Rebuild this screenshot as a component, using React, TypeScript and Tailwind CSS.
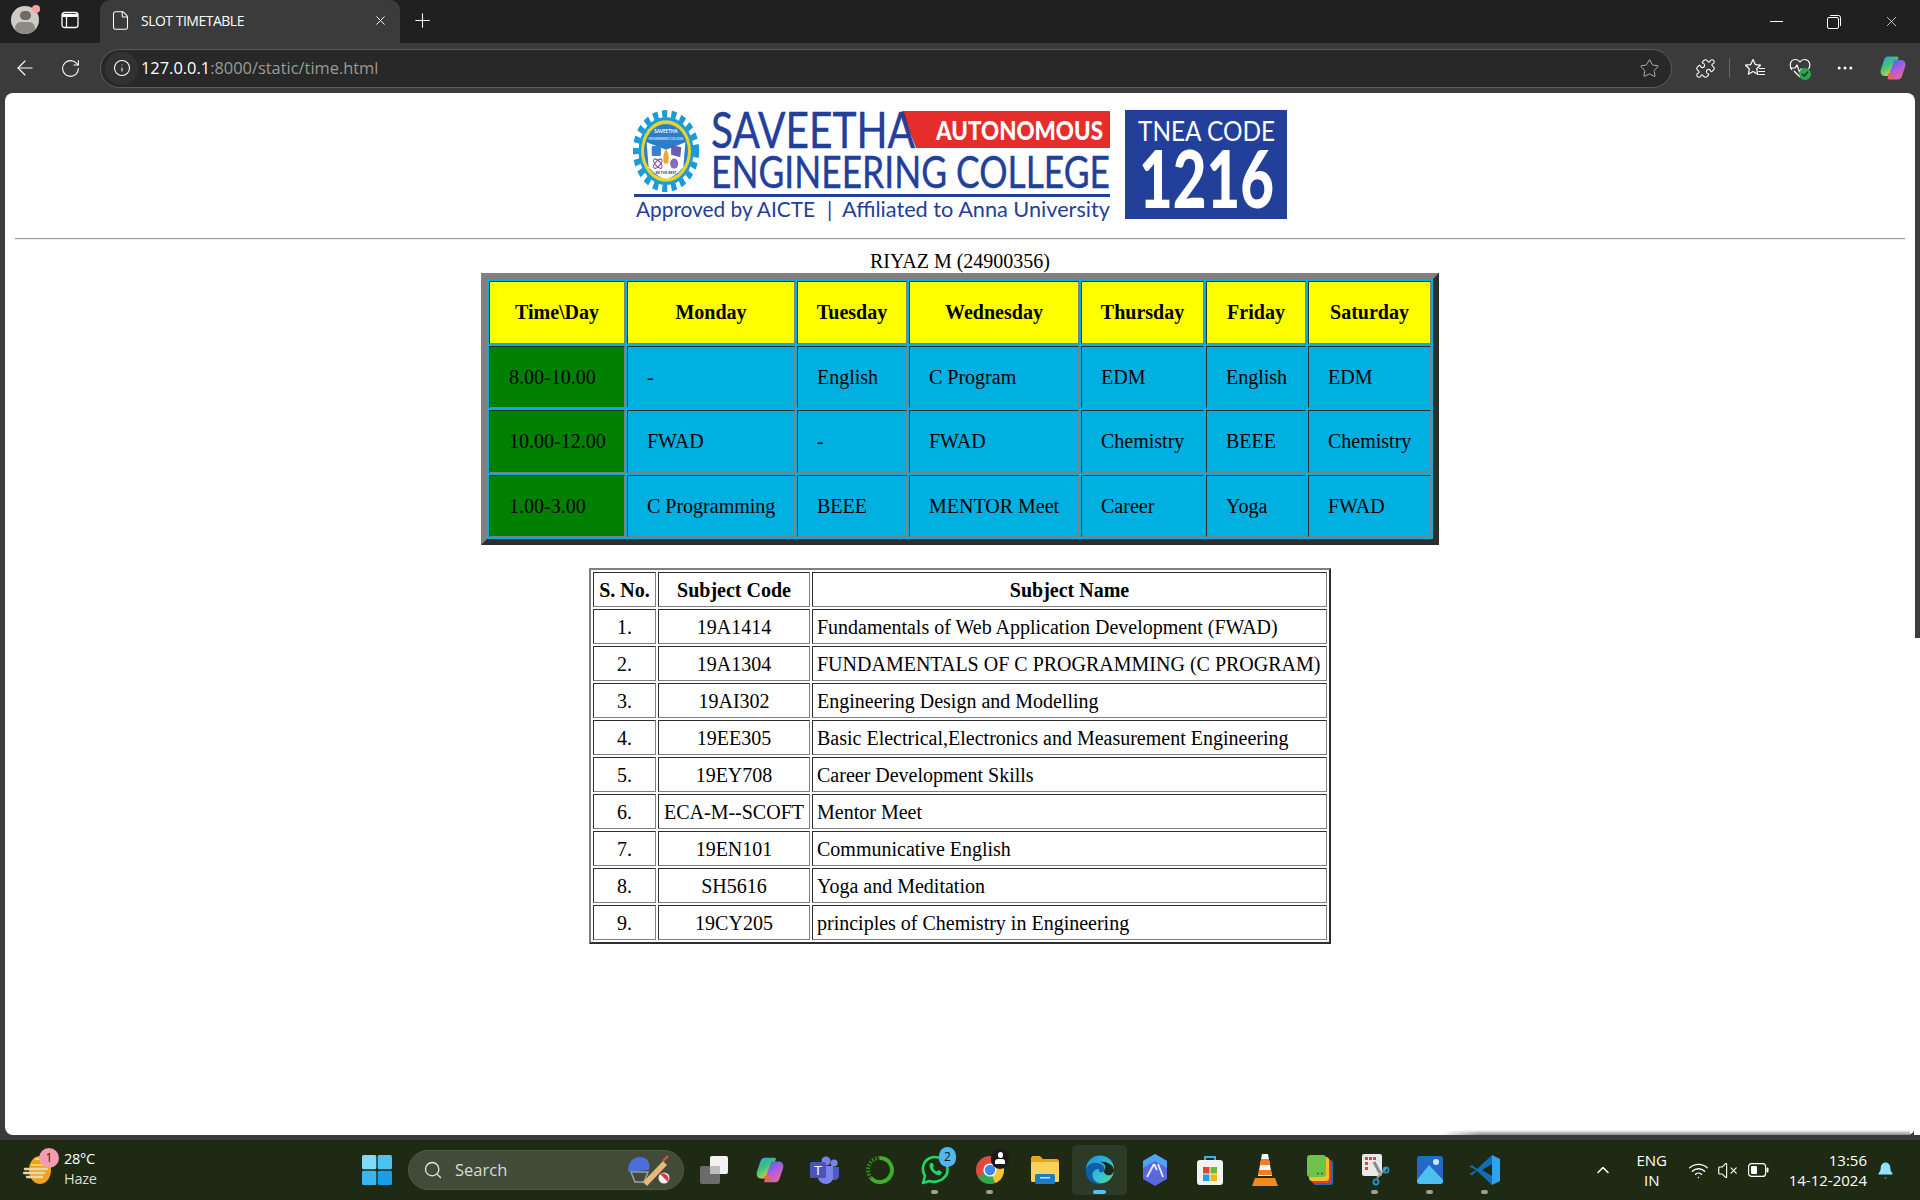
import { ArrowLeft, Bell, ChevronUp, File, Info, MoreHorizontal, Plus, Puzzle, RotateCw, Search, Star, VolumeX, Wifi, X } from 'lucide-react'

const days = ['Time\\Day', 'Monday', 'Tuesday', 'Wednesday', 'Thursday', 'Friday', 'Saturday']

const slots = [
  ['8.00-10.00', '-', 'English', 'C Program', 'EDM', 'English', 'EDM'],
  ['10.00-12.00', 'FWAD', '-', 'FWAD', 'Chemistry', 'BEEE', 'Chemistry'],
  ['1.00-3.00', 'C Programming', 'BEEE', 'MENTOR Meet', 'Career', 'Yoga', 'FWAD'],
]

const subjects = [
  ['1.', '19A1414', 'Fundamentals of Web Application Development (FWAD)'],
  ['2.', '19A1304', 'FUNDAMENTALS OF C PROGRAMMING (C PROGRAM)'],
  ['3.', '19AI302', 'Engineering Design and Modelling'],
  ['4.', '19EE305', 'Basic Electrical,Electronics and Measurement Engineering'],
  ['5.', '19EY708', 'Career Development Skills'],
  ['6.', 'ECA-M--SCOFT', 'Mentor Meet'],
  ['7.', '19EN101', 'Communicative English'],
  ['8.', 'SH5616', 'Yoga and Meditation'],
  ['9.', '19CY205', 'principles of Chemistry in Engineering'],
]

const inset = 'border border-t-[#2e2e2e] border-l-[#2e2e2e] border-r-[#808080] border-b-[#808080]'

function Logo() {
  const blue = '#22409a'
  return (
    <svg viewBox="633 93 654 129" className="block mx-auto w-[654px] h-[129px] shrink-0">
      {/* gear */}
      <g transform="translate(666 151) scale(1.02 1.26) translate(-666 -150)">
        <circle cx="666" cy="150" r="29.5" fill="none" stroke="#1d9bd8" strokeWidth="6" strokeDasharray="5 4" />
        <circle cx="666" cy="150" r="27" fill="#1d9bd8" />
        <circle cx="666" cy="150" r="24.5" fill="#e8d22c" />
        <circle cx="666" cy="150" r="21.5" fill="#2a7fc8" />
        <path d="M647 143 L666 149 L685 143 L683 163 Q674 171 666 172 Q658 171 649 163 Z" fill="#ffffff" />
        <text x="666" y="136" textAnchor="middle" fontSize="4.5" fontWeight="700" fill="#fff" fontFamily="Lato, sans-serif">SAVEETHA</text>
        <text x="666" y="141" textAnchor="middle" fontSize="3" fill="#fff" fontFamily="Lato, sans-serif">ENGINEERING COLLEGE</text>
        <rect x="652" y="146" width="9" height="8" rx="1" fill="#3d7fd0" />
        <path d="M671 145 L681 147 L680 155 L671 153 Z" fill="#6a5cb0" />
        <ellipse cx="658" cy="160" rx="5" ry="2.2" fill="none" stroke="#7a4ea8" strokeWidth="0.9" transform="rotate(40 658 160)" />
        <ellipse cx="658" cy="160" rx="5" ry="2.2" fill="none" stroke="#7a4ea8" strokeWidth="0.9" transform="rotate(-40 658 160)" />
        <path d="M666 148 Q670 154 668 160 L664 160 Q662 154 666 148 Z" fill="#f0a92c" />
        <circle cx="674" cy="160" r="4" fill="#8a6ac0" />
        <text x="666" y="168" textAnchor="middle" fontSize="3.4" fontWeight="700" fill="#22409a" fontFamily="Lato, sans-serif">BE THE BEST</text>
      </g>

      {/* name */}
      <path d="M902 111 H1110 V148 H916 Z" fill="#e52d2b" />
      <text x="711" y="148" textLength="204" lengthAdjust="spacingAndGlyphs" fontSize="50" fontWeight="400" fill={blue} stroke={blue} strokeWidth="0.4" fontFamily="Lato, sans-serif">SAVEETHA</text>
      <text x="936" y="140" textLength="167" lengthAdjust="spacingAndGlyphs" fontSize="26" fontWeight="900" fill="#fff" fontFamily="Lato, sans-serif">AUTONOMOUS</text>
      <text x="711" y="188" textLength="399" lengthAdjust="spacingAndGlyphs" fontSize="44" fontWeight="400" fill={blue} stroke={blue} strokeWidth="0.4" fontFamily="Lato, sans-serif">ENGINEERING COLLEGE</text>
      <rect x="634" y="194" width="476" height="3" fill={blue} />
      <text x="636" y="217" textLength="179" lengthAdjust="spacingAndGlyphs" fontSize="21" fill={blue} fontFamily="Lato, sans-serif">Approved by AICTE</text>
      <text x="827" y="217" fontSize="21" fill={blue} fontFamily="Lato, sans-serif">|</text>
      <text x="842" y="217" textLength="268" lengthAdjust="spacingAndGlyphs" fontSize="21" fill={blue} fontFamily="Lato, sans-serif">Affiliated to Anna University</text>

      {/* code box */}
      <rect x="1125" y="110" width="162" height="109" fill={blue} />
      <text x="1138" y="141" textLength="137" lengthAdjust="spacingAndGlyphs" fontSize="27" fill="#fff" fontFamily="Lato, sans-serif">TNEA CODE</text>
      <text x="1139" y="208" textLength="135" lengthAdjust="spacingAndGlyphs" fontSize="80" fontWeight="900" fill="#fff" fontFamily="Lato, sans-serif">1216</text>
    </svg>
  )
}

function Timetable() {
  return (
    <table className="table-fixed mx-auto w-[958px] border-separate border-spacing-[2px] bg-[#00b0e0] border-[6px] border-t-[#808080] border-l-[#808080] border-r-[#2e2e2e] border-b-[#2e2e2e]">
      <colgroup>
        <col className="w-[136px]" />
        <col className="w-[168px]" />
        <col className="w-[110px]" />
        <col className="w-[170px]" />
        <col className="w-[123px]" />
        <col className="w-[100px]" />
        <col className="w-[123px]" />
      </colgroup>
      <thead>
        <tr>
          {days.map((d) => (
            <th key={d} className={`${inset} h-[62.5px] p-0 bg-[#ffff00] font-bold text-center`}>
              {d}
            </th>
          ))}
        </tr>
      </thead>
      <tbody>
        {slots.map((row) => (
          <tr key={row[0]}>
            {row.map((c, i) => (
              <td key={i} className={`${inset} h-[62.5px] p-0 pl-[19px] text-left ${i === 0 ? 'bg-[#008000]' : 'bg-[#00b0e0]'}`}>
                {c}
              </td>
            ))}
          </tr>
        ))}
      </tbody>
    </table>
  )
}

function SubjectTable() {
  return (
    <table className="table-fixed mx-auto mt-[23px] w-[742px] border-separate border-spacing-[2px] border-2 border-t-[#808080] border-l-[#808080] border-r-[#2e2e2e] border-b-[#2e2e2e]">
      <colgroup>
        <col className="w-[63px]" />
        <col className="w-[152px]" />
        <col className="w-[515px]" />
      </colgroup>
      <thead>
        <tr>
          <th className={`${inset} h-[35px] p-0 font-bold text-center`}>S. No.</th>
          <th className={`${inset} h-[35px] p-0 font-bold text-center`}>Subject Code</th>
          <th className={`${inset} h-[35px] p-0 font-bold text-center`}>Subject Name</th>
        </tr>
      </thead>
      <tbody>
        {subjects.map((s) => (
          <tr key={s[0]}>
            <td className={`${inset} h-[35px] p-0 text-center`}>{s[0]}</td>
            <td className={`${inset} h-[35px] p-0 text-center whitespace-nowrap`}>{s[1]}</td>
            <td className={`${inset} h-[35px] p-0 pl-[4px] whitespace-nowrap`}>{s[2]}</td>
          </tr>
        ))}
      </tbody>
    </table>
  )
}

function TitleBar() {
  return (
    <div className="h-[43px] shrink-0 bg-[#202020] flex items-end text-white">
      <div className="w-[50px] h-[43px] pb-[3px] flex items-center justify-center relative">
        <div className="w-[28px] h-[28px] rounded-full bg-[#cfccc8] overflow-hidden flex flex-col items-center pt-[5px]">
          <div className="w-[11px] h-[11px] rounded-full bg-[#6e6a66]" />
          <div className="w-[20px] h-[14px] mt-[2px] rounded-full bg-[#8d8a86]" />
        </div>
        <div className="absolute top-[5px] left-[32px] w-[8px] h-[8px] rounded-full bg-[#f4a3a3]" />
      </div>
      <div className="w-[40px] h-[43px] pb-[3px] flex items-center justify-center">
        <svg width="18" height="18" viewBox="0 0 18 18" fill="none" stroke="#fff" strokeWidth="1.3">
          <rect x="1" y="1.5" width="16" height="15" rx="2.5" />
          <path d="M1.5 4.5H16.5" strokeWidth="3" />
          <path d="M5.5 5V16" />
        </svg>
      </div>
      <div className="w-[300px] h-[43px] ml-[10px] pb-[3px] bg-[#3b3b3b] rounded-t-[10px] flex items-center pl-[10px]">
        <File size={21} strokeWidth={1.2} />
        <span className="ml-[10px] text-[14px] font-['Open_Sans',sans-serif] tracking-[-0.5px]">SLOT TIMETABLE</span>
        <X size={15} strokeWidth={1.5} className="ml-auto mr-[12px]" />
      </div>
      <div className="w-[44px] h-[43px] pb-[3px] flex items-center justify-center">
        <Plus size={23} strokeWidth={1.1} />
      </div>
      <div className="ml-auto h-[43px] flex items-center">
        <div className="w-[57px] flex justify-center">
          <div className="w-[13px] h-px bg-white" />
        </div>
        <div className="w-[57px] flex justify-center">
          <svg width="14" height="14" viewBox="0 0 14 14" fill="none" stroke="#fff" strokeWidth="1">
            <rect x="0.5" y="2.5" width="11" height="11" rx="1.5" />
            <path d="M3 0.5H11.5A2 2 0 0 1 13.5 2.5V11" />
          </svg>
        </div>
        <div className="w-[58px] flex justify-center">
          <X size={17} strokeWidth={1} />
        </div>
      </div>
    </div>
  )
}

function Toolbar() {
  return (
    <div className="h-[50px] shrink-0 bg-[#3b3b3b] flex items-center text-white">
      <div className="w-[50px] flex justify-center">
        <ArrowLeft size={24} strokeWidth={1.1} />
      </div>
      <div className="w-[40px] flex justify-center">
        <RotateCw size={21} strokeWidth={1.2} />
      </div>
      <div className="w-[1572px] ml-[10px] h-[39px] rounded-full bg-[#282828] border border-[#5c5c5c] flex items-center pl-[4px] pr-[10px]">
        <div className="w-[33px] h-[33px] rounded-full bg-[#323232] flex items-center justify-center">
          <Info size={18} strokeWidth={1.4} />
        </div>
        <span className="ml-[3px] text-[16.4px] font-['Open_Sans',sans-serif]">
          127.0.0.1<span className="text-[#9a9a9a]">:8000/static/time.html</span>
        </span>
        <Star size={21} strokeWidth={1.1} className="ml-auto mr-[1px] text-[#b5b5b5]" />
      </div>
      <div className="w-[66px] flex justify-center">
        <Puzzle size={21} strokeWidth={1.2} />
      </div>
      <div className="w-px h-[20px] bg-[#666] -ml-[9px]" />
      <div className="w-[50px] flex justify-center">
        <svg width="22" height="22" viewBox="0 0 22 22" fill="none" stroke="#fff" strokeWidth="1.2" strokeLinejoin="round">
          <path d="M9 2.5L11.3 7.6L16.5 8.2L12.7 11.8L13.7 17.3L9 14.6L4.3 17.3L5.3 11.8L1.5 8.2L6.7 7.6Z" />
          <path d="M15 11.5H21M14.5 14.5H21M14.5 17.5H21" />
        </svg>
      </div>
      <div className="w-[40px] relative flex justify-center">
        <svg width="22" height="20" viewBox="0 0 22 20" fill="none" stroke="#fff" strokeWidth="1.2" strokeLinejoin="round">
          <path d="M3 12C0 8 1 2 6 1.5C8.5 1.3 10 2.5 11 4C12 2.5 13.5 1.3 16 1.5C21 2 22 7.5 19.5 11" />
          <path d="M1 10H6L8 7L10.5 14L12 11H14" />
          <path d="M5 13L11 19" />
        </svg>
        <div className="absolute left-[19px] top-[10px] w-[12px] h-[12px] rounded-full bg-[#2fa44f] flex items-center justify-center">
          <svg width="8" height="8" viewBox="0 0 8 8" fill="none" stroke="#10301a" strokeWidth="1.4">
            <path d="M1 4L3.2 6L7 1.8" />
          </svg>
        </div>
      </div>
      <div className="w-[50px] flex justify-center">
        <MoreHorizontal size={20} strokeWidth={1.6} />
      </div>
      <div className="w-[46px] flex justify-center">
        <CopilotIcon size={28} />
      </div>
    </div>
  )
}

function CopilotIcon({ size }: { size: number }) {
  return (
    <svg width={size} height={size} viewBox="0 0 28 28">
      <defs>
        <linearGradient id={`cpa${size}`} x1="0" y1="0" x2="0.6" y2="1">
          <stop offset="0" stopColor="#2f9be8" />
          <stop offset="0.5" stopColor="#3fc37a" />
          <stop offset="1" stopColor="#f2d03a" />
        </linearGradient>
        <linearGradient id={`cpb${size}`} x1="0.2" y1="0" x2="0.8" y2="1">
          <stop offset="0" stopColor="#3b6fe0" />
          <stop offset="0.5" stopColor="#b25be0" />
          <stop offset="1" stopColor="#f26a8a" />
        </linearGradient>
      </defs>
      <path d="M9 2.5H18C19.5 2.5 20 4 19 5L13 21C12.5 22.5 11 23 9.5 22H5C2.5 21.5 1 19 1.7 16L5 6C5.8 3.8 7 2.5 9 2.5Z" fill={`url(#cpa${size})`} />
      <path d="M19 6H23C25.5 6.5 27 9 26.3 12L23 22C22.2 24.2 21 25.5 19 25.5H10C8.5 25.5 8 24 9 23L15 7C15.5 6 17 5.5 19 6Z" fill={`url(#cpb${size})`} />
      <path d="M8.5 19.5H15L12.8 25H10Z" fill="#f0643c" />
    </svg>
  )
}

function TaskIcon({ children, dot, active }: { children: React.ReactNode; dot?: boolean; active?: boolean }) {
  return (
    <div className={`relative w-[55px] h-[50px] shrink-0 flex items-center justify-center rounded-[5px] ${active ? 'bg-[#2e3a28]' : ''}`}>
      {children}
      {dot && <div className="absolute bottom-[1px] left-[23.5px] w-[7px] h-[4px] rounded-full bg-[#9a9f96]" />}
      {active && <div className="absolute bottom-[1px] left-[20.5px] w-[13px] h-[4px] rounded-full bg-[#4fc3f7]" />}
    </div>
  )
}

function Taskbar() {
  return (
    <div className="h-[60px] shrink-0 bg-[#1f2a15] flex items-center text-white font-['Open_Sans',sans-serif]">
      {/* weather */}
      <div className="w-[362px] h-full flex items-center relative shrink-0">
        <svg width="34" height="34" viewBox="0 0 34 34" className="ml-[23px]">
          <ellipse cx="17" cy="17" rx="11" ry="14" fill="#f2a01e" />
          <path d="M12 6H26M8 12H27" stroke="#ffd65a" strokeWidth="2" />
          <path d="M2 16H24M1 20H21M4 24H19" stroke="#e9d7a8" strokeWidth="2.4" strokeLinecap="round" />
        </svg>
        <div className="absolute left-[39px] top-[8px] w-[20px] h-[20px] rounded-full bg-[#f59db0] flex items-center justify-center text-[12px] text-[#222]">1</div>
        <div className="ml-[7px] -mt-[2px] flex flex-col leading-[20px] text-[14.5px] tracking-[-0.3px]">
          <span>28°C</span>
          <span className="text-[#d8dcd2]">Haze</span>
        </div>
      </div>
      {/* start */}
      <div className="w-[46px] shrink-0">
        <svg width="30" height="30" viewBox="0 0 30 30">
          <rect x="0" y="0" width="14.3" height="14.3" rx="1.5" fill="#7fdcf8" />
          <rect x="15.7" y="0" width="14.3" height="14.3" rx="1.5" fill="#4cc2f1" />
          <rect x="0" y="15.7" width="14.3" height="14.3" rx="1.5" fill="#3ab7f0" />
          <rect x="15.7" y="15.7" width="14.3" height="14.3" rx="1.5" fill="#1a9eea" />
        </svg>
      </div>
      {/* search */}
      <div className="w-[276px] h-[40px] shrink-0 rounded-full bg-[#414b38] border border-[#4f5946] flex items-center pl-[14px] pr-[12px]">
        <Search size={20} strokeWidth={1.6} className="text-[#e6e6e6]" />
        <span className="ml-[12px] text-[16.5px] text-[#d9dcd5]">Search</span>
        <svg width="46" height="34" viewBox="0 0 46 34" className="ml-auto">
          <path d="M3 18C3 8 9 4 15 4C22 4 26 10 24 17L4 19Z" fill="#4a6fd8" />
          <path d="M6 19H23L19 29H10Z" fill="none" stroke="#9aa0a0" strokeWidth="1.5" />
          <path d="M18 29L38 8L42 12L22 33Z" fill="#e8b878" />
          <path d="M38 8L43 3" stroke="#d6504a" strokeWidth="2.4" />
          <circle cx="39" cy="25" r="5.5" fill="#f4f0f0" />
          <path d="M35 21A6 6 0 0 1 43 29Z" fill="#d83a4a" />
        </svg>
      </div>
      {/* apps */}
      <div className="flex items-center ml-[3px]">
        <TaskIcon>
          <svg width="30" height="28" viewBox="0 0 30 28">
            <rect x="0" y="10" width="20" height="18" rx="2" fill="#6b6b6b" />
            <rect x="10" y="0" width="18" height="18" rx="2" fill="#f2f2f2" />
            <rect x="10" y="10" width="10" height="8" fill="#bdbdbd" />
          </svg>
        </TaskIcon>
        <TaskIcon><CopilotIcon size={30} /></TaskIcon>
        <TaskIcon>
          <svg width="30" height="28" viewBox="0 0 30 28">
            <circle cx="24" cy="7" r="3.6" fill="#7b83eb" />
            <path d="M19 11H29V19C29 22 27 24 24 24H19Z" fill="#5059c9" />
            <circle cx="16" cy="5" r="4.5" fill="#7b83eb" />
            <path d="M8 10H23V21C23 25 20 28 16 28C12 28 8 25 8 21Z" fill="#7b83eb" />
            <rect x="0" y="6" width="16" height="16" rx="1.5" fill="#4b53bc" />
            <text x="8" y="19" textAnchor="middle" fontSize="13" fill="#fff" fontFamily="Liberation Sans, sans-serif">T</text>
          </svg>
        </TaskIcon>
        <TaskIcon>
          <svg width="30" height="30" viewBox="0 0 30 30" fill="none">
            <path d="M15 3A12 12 0 1 1 6 23" stroke="#3fae2a" strokeWidth="4" />
            <path d="M6 23A12 12 0 0 1 15 3" stroke="#2f8a22" strokeWidth="4" strokeDasharray="1.6 1.6" />
          </svg>
        </TaskIcon>
        <TaskIcon dot>
          <svg width="30" height="32" viewBox="0 0 30 32" fill="none">
            <path d="M3 29L5 22C1 15 3 7 10 4C18 1 27 6 27.5 15C28 24 18 30 9 27Z" stroke="#25d366" strokeWidth="2.6" strokeLinejoin="round" />
            <path d="M11 9C9 10 9 13 11 16C13 19 17 22 20 21C22 20 22 18 21.5 17.5L18.5 16L17 17.5C15 17 13.5 15 13 13.5L14 12L12.8 9Z" fill="#25d366" />
          </svg>
          <div className="absolute left-[32px] top-[2px] w-[17px] h-[20px] rounded-full bg-[#4db8f2] flex items-center justify-center text-[12px] text-[#111]">2</div>
        </TaskIcon>
        <TaskIcon dot>
          <svg width="30" height="30" viewBox="0 0 30 30">
            <circle cx="15" cy="15" r="14" fill="#dd4b3e" />
            <path d="M15 15L3 22A14 14 0 0 0 20 28Z" fill="#2da94f" />
            <path d="M15 15L20 28A14 14 0 0 0 28.5 11L15 9Z" fill="#f7c52c" />
            <circle cx="15" cy="15" r="6.6" fill="#fff" />
            <circle cx="15" cy="15" r="5.2" fill="#4285f4" />
          </svg>
          <div className="absolute left-[29px] top-[4px] w-[18px] h-[20px] rounded-full bg-[#1a1a1a] flex flex-col items-center pt-[3px]">
            <div className="w-[5px] h-[6px] rounded-full bg-white" />
            <div className="w-[10px] h-[5px] mt-[1px] rounded-t-[3px] bg-white" />
          </div>
        </TaskIcon>
        <TaskIcon>
          <svg width="28" height="28" viewBox="0 0 28 28">
            <path d="M0 2C0 1 1 0 2 0H9L12 3H26C27 3 28 4 28 5V8H0Z" fill="#e8a31c" />
            <rect x="0" y="6" width="28" height="20" rx="1.5" fill="#fad15c" />
            <rect x="4" y="18" width="20" height="10" rx="1.5" fill="#1a7fc4" />
            <rect x="9" y="21" width="10" height="1.5" fill="#bfe3f7" />
          </svg>
        </TaskIcon>
        <TaskIcon active>
          <svg width="30" height="30" viewBox="0 0 30 30">
            <defs>
              <linearGradient id="edgea" x1="0" y1="0" x2="1" y2="1">
                <stop offset="0" stopColor="#1e8ed8" />
                <stop offset="0.6" stopColor="#35c1d8" />
                <stop offset="1" stopColor="#59d67e" />
              </linearGradient>
            </defs>
            <circle cx="15" cy="14.5" r="14" fill="url(#edgea)" />
            <path d="M1 15C2 9 8 7 13 8C18 9 21 13 19 16C17 19 13 17 14 14C9 14 6 18 8 23C10 27 15 29 18 29C8 31 0 24 1 15Z" fill="#0f5fa8" />
            <path d="M19 16C22 12 20 8 15 7C21 6 28 9 29 15C29 19 25 21 22 20C20 19 19 18 19 16Z" fill="#1f2a15" />
          </svg>
        </TaskIcon>
        <TaskIcon>
          <svg width="26" height="32" viewBox="0 0 26 32">
            <path d="M13 0L25 7V25L13 32L1 25V7Z" fill="#5b66e0" />
            <path d="M1 7L13 0L25 7V14L13 7L1 14Z" fill="#4fa3f0" />
            <path d="M5 23L12 10M12 10L15 16M16 10L21 23" stroke="#e8f0ff" strokeWidth="1.8" fill="none" />
          </svg>
        </TaskIcon>
        <TaskIcon>
          <svg width="26" height="30" viewBox="0 0 26 30">
            <path d="M8 6V2H18V6" fill="none" stroke="#30b7ef" strokeWidth="2" />
            <rect x="0" y="5" width="26" height="25" rx="3" fill="#f3f3f3" />
            <rect x="6" y="12" width="6.5" height="6.5" fill="#e8442a" />
            <rect x="13.5" y="12" width="6.5" height="6.5" fill="#6cbb2c" />
            <rect x="6" y="19.5" width="6.5" height="6.5" fill="#1fa1e8" />
            <rect x="13.5" y="19.5" width="6.5" height="6.5" fill="#f8b60c" />
          </svg>
        </TaskIcon>
        <TaskIcon>
          <svg width="26" height="32" viewBox="0 0 26 32">
            <path d="M10 0H16L20 22H6Z" fill="#f5f5f5" />
            <path d="M9.2 5H16.8L18 11H8ZM7 16H19L20 21H6Z" fill="#f47b1f" />
            <path d="M3 24H23L26 32H0Z" fill="#f08a1a" />
          </svg>
        </TaskIcon>
        <TaskIcon>
          <svg width="26" height="30" viewBox="0 0 26 30">
            <rect x="6" y="5" width="20" height="25" rx="3" fill="#1c6fb5" />
            <rect x="4" y="4" width="20" height="24" rx="3" fill="#e83a2a" />
            <rect x="2" y="2" width="20" height="24" rx="3" fill="#f3c228" />
            <rect x="0" y="0" width="19" height="22" rx="3" fill="#6cc24a" />
            <circle cx="11" cy="18.5" r="1" fill="#3a6a2a" />
            <circle cx="15" cy="18.5" r="1" fill="#3a6a2a" />
          </svg>
        </TaskIcon>
        <TaskIcon dot>
          <svg width="30" height="32" viewBox="0 0 30 32">
            <rect x="2" y="0" width="20" height="22" rx="2" fill="#e9e9e9" />
            <rect x="5" y="3" width="3" height="3" fill="#e0483a" />
            <rect x="5" y="8" width="3" height="3" fill="#e0483a" />
            <rect x="5" y="13" width="3" height="3" fill="#e0483a" />
            <rect x="9" y="3" width="3" height="3" fill="#e0483a" />
            <rect x="13" y="3" width="3" height="3" fill="#e0483a" />
            <path d="M14 8L20 19" stroke="#8a8a8a" strokeWidth="3" />
            <path d="M26 14L17 24" stroke="#a0a0a0" strokeWidth="2" />
            <circle cx="26" cy="16" r="2.6" fill="none" stroke="#1f9ad6" strokeWidth="1.6" />
            <circle cx="16" cy="28" r="2.6" fill="none" stroke="#1f9ad6" strokeWidth="1.6" />
          </svg>
        </TaskIcon>
        <TaskIcon dot>
          <svg width="26" height="28" viewBox="0 0 26 28">
            <defs>
              <linearGradient id="photoa" x1="0" y1="0" x2="0" y2="1">
                <stop offset="0" stopColor="#1c6fc8" />
                <stop offset="1" stopColor="#3a58c8" />
              </linearGradient>
            </defs>
            <rect x="0" y="0" width="26" height="28" rx="3" fill="url(#photoa)" />
            <circle cx="19" cy="6" r="3" fill="#cfe8ff" />
            <path d="M0 24L12 9L26 24V25C26 27 25 28 23 28H3C1 28 0 27 0 25Z" fill="#4ec0ef" />
          </svg>
        </TaskIcon>
        <TaskIcon dot>
          <svg width="32" height="32" viewBox="0 0 32 32">
            <path d="M23 1L8 15L3 11L0.5 12.5L7 16L0.5 20L3 21.5L8 17L23 31L23 22L13 16L23 10Z" fill="#0f6fb8" />
            <path d="M23 1L31 5V27L23 31Z" fill="#2aa4f0" />
          </svg>
        </TaskIcon>
      </div>
      {/* tray */}
      <div className="ml-auto flex items-center h-full shrink-0">
        <ChevronUp size={20} strokeWidth={1.8} />
        <div className="ml-[15px] w-[48px] flex flex-col items-center leading-[20px] text-[15px]">
          <span>ENG</span>
          <span>IN</span>
        </div>
        <Wifi size={21} strokeWidth={1.6} className="ml-[12px]" />
        <VolumeX size={21} strokeWidth={1.3} className="ml-[8px]" />
        <svg width="21" height="14" viewBox="0 0 21 14" fill="none" stroke="#fff" strokeWidth="1.2" className="ml-[10px]">
          <rect x="0.6" y="0.6" width="17" height="12.8" rx="3" />
          <rect x="3" y="3" width="6" height="8" rx="1" fill="#fff" stroke="none" />
          <rect x="18.5" y="4.5" width="2" height="5" rx="1" fill="#fff" stroke="none" />
        </svg>
        <div className="ml-[20px] flex flex-col items-end leading-[20px] text-[15px]">
          <span>13:56</span>
          <span>14-12-2024</span>
        </div>
        <Bell size={19} strokeWidth={0} fill="#8fe3ff" className="ml-[9px] mr-[25px]" />
      </div>
    </div>
  )
}

export default function App() {
  return (
    <div className="w-[1920px] h-[1200px] flex flex-col overflow-hidden bg-[#3b3b3b]">
      <TitleBar />
      <Toolbar />
      <div className="relative h-[1042px] shrink-0 mx-[5px] bg-white rounded-[8px] flex flex-col font-['Liberation_Serif',serif] text-[20px] text-black">
        <Logo />
        <hr className="mx-[10px] mt-[16px] border-0 border-t border-b border-t-[#9a9a9a] border-b-[#eeeeee] h-[2px]" />
        <div className="mt-[10px] h-[23px] leading-[23px] text-center">RIYAZ M (24900356)</div>
        <Timetable />
        <SubjectTable />
        <div className="absolute -right-[5px] top-[545px] bottom-0 w-[6px] bg-white" />
        <div className="absolute right-[5px] bottom-0 w-[470px] h-[5px] bg-gradient-to-b from-white to-[#8a8a8a]">
          <div className="h-full w-[40px] bg-gradient-to-r from-white to-transparent" />
        </div>
      </div>
      <div className="flex-1" />
      <Taskbar />
    </div>
  )
}
